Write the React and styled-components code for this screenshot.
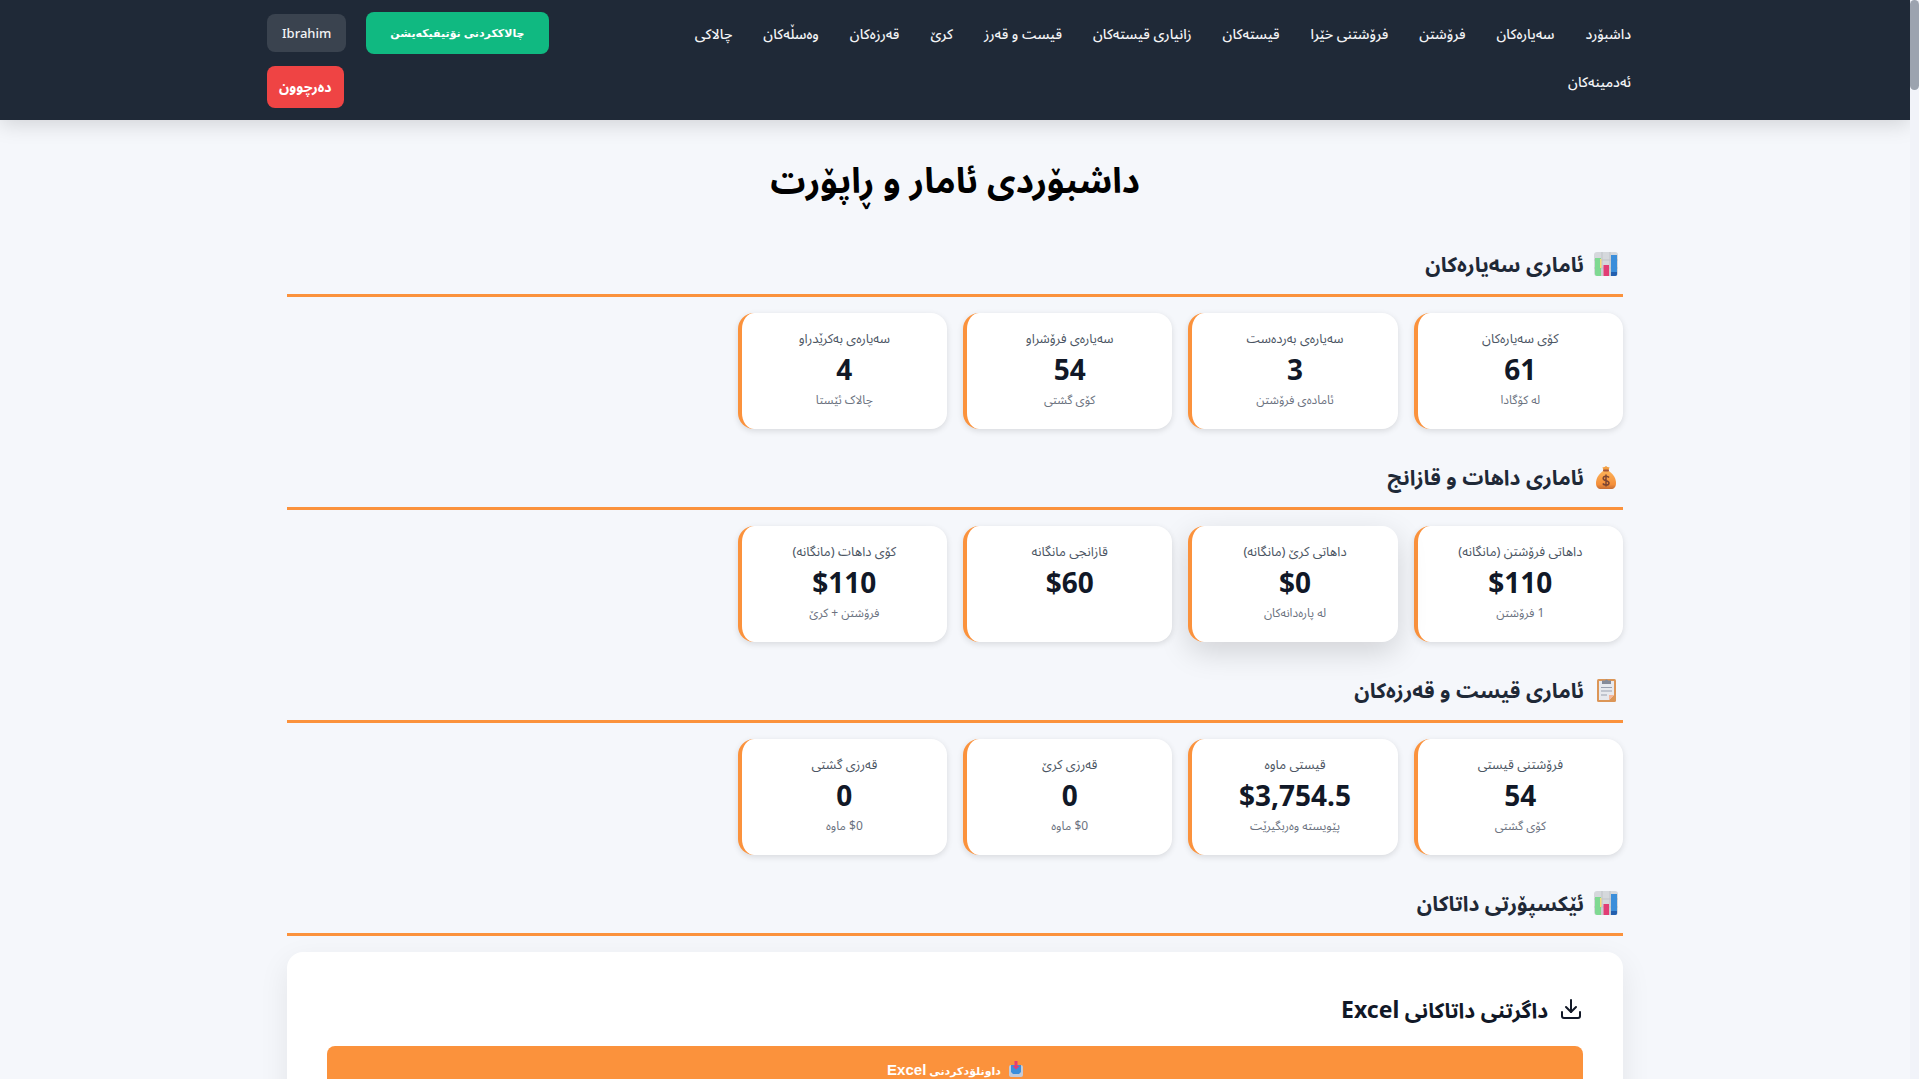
import React from "react";
import styled, { createGlobalStyle } from "styled-components";
import { Download } from "lucide-react";

const GlobalStyle = createGlobalStyle`
  *, *::before, *::after { box-sizing: border-box; }
  body {
    margin: 0;
    background: #f5f7fb;
    color: #111827;
    font-family: "Noto Sans", "Noto Sans Arabic", "DejaVu Sans", sans-serif;
  }
  h1, h2, h3, p { margin: 0; }
`;

const Shell = styled.div`
  display: grid;
  grid-template-columns: 9px minmax(0, 1fr);
  height: 100vh;
  overflow: hidden;
`;

const ScrollTrack = styled.div`
  background: #f1f3f9;
`;

const ScrollThumb = styled.div`
  height: 90px;
  border-radius: 5px;
  background: #9ca3af;
`;

const Page = styled.div`
  min-width: 0;
  overflow-y: auto;
  scrollbar-width: none;
`;

const Header = styled.header`
  background: #1f2937;
  box-shadow: 0 4px 20px rgba(0, 0, 0, 0.15);
`;

const HeaderInner = styled.div`
  display: flex;
  align-items: center;
  justify-content: space-between;
  max-width: 1400px;
  margin: 0 auto;
  padding: 12px;
`;

const Nav = styled.nav`
  display: flex;
  flex-wrap: wrap;
  gap: 8px 7px;
  width: 980px;
  padding-bottom: 4px;
`;

const NavLink = styled.a`
  padding: 8px 12px;
  color: #f3f4f6;
  font-size: 14px;
  line-height: 24px;
  font-weight: 500;
  text-decoration: none;
  white-space: nowrap;
`;

const Actions = styled.div`
  display: flex;
  flex-wrap: wrap;
  align-items: center;
  justify-content: flex-end;
  gap: 12px 20px;
  width: 300px;
`;

const ActionButton = styled.button`
  height: 42px;
  padding: 0 ${(p) => p.$pad}px;
  border: 0;
  border-radius: 8px;
  background: ${(p) => p.$bg};
  color: #fff;
  font-family: ${(p) => (p.$plain ? '"Liberation Sans", "DejaVu Sans", sans-serif' : "inherit")};
  font-size: ${(p) => (p.$plain ? 11 : 14)}px;
  font-weight: 700;
  white-space: nowrap;
`;

const UserBadge = styled.span`
  padding: 8px 15px;
  border-radius: 8px;
  background: rgba(255, 255, 255, 0.12);
  color: #f3f4f6;
  font-size: 13px;
  line-height: 22px;
  font-weight: 500;
`;

const Main = styled.main`
  max-width: 1400px;
  margin: 0 auto;
  padding: 32px;
`;

const PageTitle = styled.h1`
  margin-bottom: 40px;
  color: #000;
  font-size: 35px;
  line-height: 56px;
  font-weight: 700;
  text-align: center;
`;

const Section = styled.section`
  margin-bottom: 32px;
`;

const SectionTitle = styled.h2`
  display: flex;
  align-items: center;
  gap: 10px;
  margin-bottom: 16px;
  padding: 0 5px 14px;
  border-bottom: 3px solid #fb923c;
  color: #1f2937;
  font-size: 21px;
  line-height: 32px;
  font-weight: 700;

  svg { width: 24px; height: 24px; }
`;

const CardGrid = styled.div`
  display: grid;
  grid-template-columns: repeat(auto-fill, minmax(200px, 1fr));
  gap: 16px;
`;

const Card = styled.article`
  padding: 15px 16px 19px;
  border-left: 4px solid #fb923c;
  border-radius: 16px;
  background: #fff;
  box-shadow: ${(p) => (p.$raised ? "0 10px 30px rgba(0, 0, 0, 0.15)" : "0 2px 6px rgba(0, 0, 0, 0.12)")};
  text-align: center;
`;

const CardLabel = styled.h3`
  color: #4b5563;
  font-size: 13px;
  line-height: 20px;
  font-weight: 400;
`;

const CardValue = styled.p`
  margin: 5px 0;
  color: #111827;
  font-size: 28px;
  line-height: 32px;
  font-weight: 700;
`;

const CardNote = styled.p`
  min-height: 20px;
  color: #6b7280;
  font-size: 12px;
  line-height: 20px;
`;

const ExportCard = styled.div`
  padding: 40px;
  border-radius: 16px;
  background: #fff;
  box-shadow: 0 10px 30px rgba(0, 0, 0, 0.08);
`;

const Latin = styled.bdi`
  font-size: ${(p) => p.$size}px;
`;

const ExportTitle = styled.h3`
  display: flex;
  align-items: center;
  gap: 11px;
  height: 34px;
  margin-bottom: 20px;
  color: #111827;
  font-size: 21px;
  line-height: 32px;
  font-weight: 700;
`;

const ExportButton = styled.button`
  display: flex;
  align-items: center;
  justify-content: center;
  gap: 8px;
  width: 100%;
  height: 46px;
  border: 0;
  border-radius: 8px;
  background: #fb923c;
  color: #fff;
  font-family: "Liberation Sans", "DejaVu Sans", sans-serif;
  font-size: 11px;
  font-weight: 700;

  svg { width: 14px; height: 16px; }
`;

const ChartIcon = () => (
  <svg viewBox="0 0 24 24" aria-hidden="true">
    <rect width="24" height="24" rx="3" fill="#d5d8dc" />
    <path d="M0 8h24M0 16h24M8 0v24M16 0v24" stroke="#bfc3c8" strokeWidth="1" />
    <path d="M1 6h6v18H3a2 2 0 0 1-2-2z" fill="#7fd992" />
    <path d="M6 7h1.500v9H6z" fill="#f5dc7a" />
    <rect x="9.500" y="13" width="5.500" height="11" fill="#e23d75" />
    <path d="M17 3h6v19a2 2 0 0 1-2 2h-4z" fill="#3b8eda" />
    <path d="M17 20h6v2a2 2 0 0 1-2 2h-4z" fill="#235fae" />
  </svg>
);

const MoneyIcon = () => (
  <svg viewBox="0 0 24 24" aria-hidden="true">
    <defs>
      <linearGradient id="bag" x1="0" y1="0" x2="0" y2="1">
        <stop offset="0" stopColor="#fdb158" />
        <stop offset="0.750" stopColor="#f48f3a" />
        <stop offset="1" stopColor="#c46c35" />
      </linearGradient>
    </defs>
    <path d="M8.500 2c1 .5 2 .2 3.500-1 1.500 1.200 2.500 1.500 3.500 1L14.500 6h-5z" fill="#f3a043" />
    <path d="M9 6h6c4 3 7 7 7 12 0 4-2 6-5 6H7c-3 0-5-2-5-6 0-5 3-9 7-12z" fill="url(#bag)" />
    <rect x="9" y="4.500" width="6" height="2" rx="1" fill="#a3543a" />
    <path d="M15 12.500c-.6-1-1.600-1.300-3-1.300-1.700 0-2.800.8-2.800 2.200 0 3 5.800 1.500 5.800 4.500 0 1.400-1.200 2.100-3 2.100-1.500 0-2.600-.5-3.200-1.500M12 9.500v12" fill="none" stroke="#7d4533" strokeWidth="1.500" />
  </svg>
);

const ClipboardIcon = () => (
  <svg viewBox="0 0 24 24" aria-hidden="true">
    <rect x="3" y="1" width="19" height="23" rx="1.500" fill="#dc9657" />
    <path d="M5 3h15v14l-5 5H5z" fill="#e7e9ee" />
    <path d="M15 22v-5h5z" fill="#f5b79b" />
    <path d="M8 6V2.500h3a1.600 1.600 0 0 1 3 0h3V6z" fill="#858b99" />
    <path d="M7 9.500h11M7 13h11M7 17h6" stroke="#9aa1b0" strokeWidth="1.200" />
  </svg>
);

const InboxIcon = () => (
  <svg viewBox="0 0 14 16" aria-hidden="true">
    <rect x="0" y="4" width="14" height="12" rx="2" fill="#c3cad8" />
    <path d="M2 4h10v7l-2 2H4l-2-2z" fill="#3b8edb" />
    <path d="M5.500 0h3v5h2L7 8.500 3.500 5h2z" fill="#e23d75" />
  </svg>
);

const links = [
  "داشبۆرد", "سەیارەکان", "فرۆشتن", "فرۆشتنی خێرا", "قیستەکان",
  "زانیاری قیستەکان", "قیست و قەرز", "کرێ", "قەرزەکان", "وەسڵەکان",
  "چالاکی", "ئەدمینەکان",
];

const sections = [
  {
    title: "ئاماری سەیارەکان",
    Icon: ChartIcon,
    cards: [
      { label: "کۆی سەیارەکان", value: "61", note: "لە کۆگادا" },
      { label: "سەیارەی بەردەست", value: "3", note: "ئامادەی فرۆشتن" },
      { label: "سەیارەی فرۆشراو", value: "54", note: "کۆی گشتی" },
      { label: "سەیارەی بەکرێدراو", value: "4", note: "چالاک ئێستا" },
    ],
  },
  {
    title: "ئاماری داهات و قازانج",
    Icon: MoneyIcon,
    cards: [
      { label: "داهاتی فرۆشتن (مانگانە)", value: "$110", note: "1 فرۆشتن" },
      { label: "داهاتی کرێ (مانگانە)", value: "$0", note: "لە پارەدانەکان", raised: true },
      { label: "قازانجی مانگانە", value: "$60", note: "" },
      { label: "کۆی داهات (مانگانە)", value: "$110", note: "فرۆشتن + کرێ" },
    ],
  },
  {
    title: "ئاماری قیست و قەرزەکان",
    Icon: ClipboardIcon,
    cards: [
      { label: "فرۆشتنی قیستی", value: "54", note: "کۆی گشتی" },
      { label: "قیستی ماوە", value: "$3,754.5", note: "پێویستە وەربگیرێت" },
      { label: "قەرزی کرێ", value: "0", note: "$0 ماوە" },
      { label: "قەرزی گشتی", value: "0", note: "$0 ماوە" },
    ],
  },
];

export default function App() {
  return (
    <Shell dir="rtl">
      <GlobalStyle />
      <ScrollTrack>
        <ScrollThumb />
      </ScrollTrack>
      <Page>
        <Header>
          <HeaderInner>
            <Nav>
              {links.map((text) => (
                <NavLink key={text} href="#">{text}</NavLink>
              ))}
            </Nav>
            <Actions>
              <ActionButton type="button" $plain $pad={24} $bg="#10b981">چالاککردنی نۆتیفیکەیشن</ActionButton>
              <UserBadge>Ibrahim</UserBadge>
              <ActionButton type="button" $pad={12} $bg="#ef4444">دەرچوون</ActionButton>
            </Actions>
          </HeaderInner>
        </Header>
        <Main>
          <PageTitle>داشبۆردی ئامار و ڕاپۆرت</PageTitle>
          {sections.map(({ title, Icon, cards }) => (
            <Section key={title}>
              <SectionTitle><Icon />{title}</SectionTitle>
              <CardGrid>
                {cards.map((card) => (
                  <Card key={card.label} $raised={card.raised}>
                    <CardLabel>{card.label}</CardLabel>
                    <CardValue dir="ltr">{card.value}</CardValue>
                    <CardNote>{card.note}</CardNote>
                  </Card>
                ))}
              </CardGrid>
            </Section>
          ))}
          <Section>
            <SectionTitle><ChartIcon />ئێکسپۆرتی داتاکان</SectionTitle>
            <ExportCard>
              <ExportTitle>
                <Download size={24} />
                <span>داگرتنی داتاکانی <Latin $size={23}>Excel</Latin></span>
              </ExportTitle>
              <ExportButton type="button">
                <InboxIcon />
                <span>داونلۆدکردنی <Latin $size={15}>Excel</Latin></span>
              </ExportButton>
            </ExportCard>
          </Section>
        </Main>
      </Page>
    </Shell>
  );
}
